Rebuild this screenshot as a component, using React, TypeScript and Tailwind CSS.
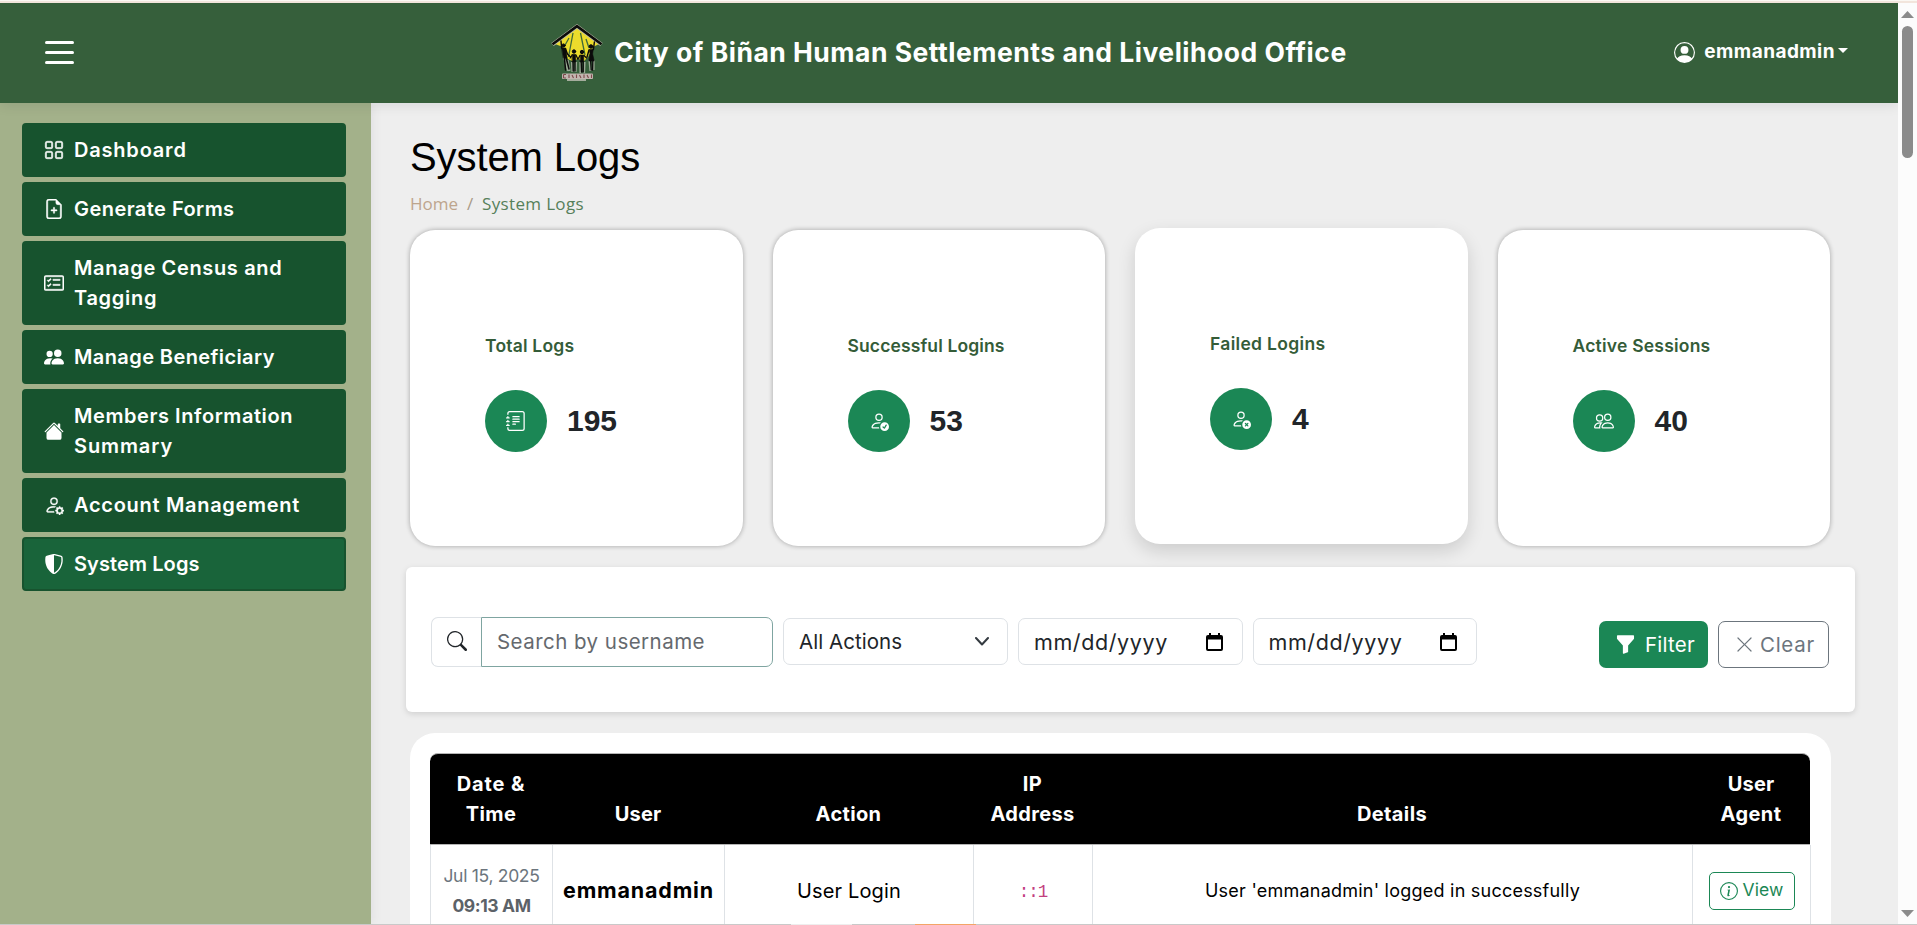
import type { ReactNode } from "react";
import {
  BsCardChecklist,
  BsFileEarmarkPlus,
  BsFunnelFill,
  BsGrid,
  BsHouseFill,
  BsInfoCircle,
  BsJournalText,
  BsPeople,
  BsPeopleFill,
  BsPersonCheck,
  BsPersonCircle,
  BsPersonGear,
  BsPersonX,
  BsSearch,
  BsShieldShaded,
  BsXLg,
} from "react-icons/bs";

function Logo() {
  return (
    <svg width="52" height="58" viewBox="0 0 52 58" className="shrink-0">
      <path d="M26 3 L48 20 L42 23 L37 33 L33 37 L27 35 L21 37 L17 35 L12 23 L4 20 Z" fill="#ecdc2c" />
      <path d="M22 9 L17.5 33 M29.5 9 L34 31 M18 14 L13 23 M35 15 L38 24" stroke="#3f6a3a" strokeWidth="1.3" />
      <path d="M1.5 20.5 L26 2.4 L50.5 20.5" fill="none" stroke="#b9b9a8" strokeWidth="4" />
      <path d="M1.5 20.3 L26 2.2 L50.5 20.3" fill="none" stroke="#0c0c0a" strokeWidth="2.6" />
      <path d="M13 33 L17 47 M16.5 36 L18.5 47 M21 38 L21.5 48 M25 38 L24.5 48 M29.5 38 L29.5 49 M33.5 38 L33 49 M38.5 36 L39.5 47 M42.5 36 L42.5 46" stroke="#c3c9ba" strokeWidth="2.2" opacity="0.7" />
      <g stroke="#0a0a0a" fill="#0a0a0a" strokeLinecap="round">
        <circle cx="12.5" cy="21.5" r="1.6" />
        <path d="M10 17 L10.6 24 M14.5 25 L16.5 30 L19.5 33" strokeWidth="1.4" fill="none" />
        <path d="M10.8 24 L14.8 24 L16 34 L12.6 34 Z" strokeWidth="0.6" />
        <path d="M13.4 34 L14.6 46 M15.2 34 L18 45" strokeWidth="1.5" fill="none" />
        <circle cx="23" cy="27.5" r="1.7" />
        <path d="M21.3 30.5 L24.7 30.5 L24.6 38 L21.4 38 Z" strokeWidth="0.6" />
        <path d="M21.2 31 L19.2 34 M25 31 L26.8 35" strokeWidth="1.2" fill="none" />
        <path d="M22 38 L22.2 47 M24 38 L24 47" strokeWidth="1.4" fill="none" />
        <circle cx="31" cy="28" r="1.7" />
        <path d="M29.3 31 L32.7 31 L32.7 38 L29.4 38 Z" strokeWidth="0.6" />
        <path d="M33 31.5 L35.5 34 M29 31.5 L27 35" strokeWidth="1.2" fill="none" />
        <path d="M30.2 38 L30.6 48 M32.2 38 L32.2 48" strokeWidth="1.4" fill="none" />
        <circle cx="40" cy="22.5" r="1.8" />
        <path d="M38.4 25.5 L42.2 25.5 L41.6 30 L43.2 37 L37.8 37 L39 30 Z" strokeWidth="0.6" />
        <path d="M42.4 25.5 L43.4 18 M38 26 L36 33" strokeWidth="1.4" fill="none" />
        <path d="M39.6 37 L40.2 46 M41.8 37 L41.6 46" strokeWidth="1.3" fill="none" />
      </g>
      <rect x="11" y="49.5" width="31" height="5.5" rx="1" fill="#c2b6b0" />
      <rect x="16" y="55" width="19" height="2" fill="#a5ad9d" />
      <path
        d="M12.5 50.5 V54 M12.5 50.5 H15 M12.5 54 H15 M18 50.5 V54 M21 51 L22.5 54 M25.5 50.5 V54 M28.5 51 L30 54 M33 50.5 V54 M36 51 L37.5 54 M40.5 50.5 V54"
        stroke="#7d4a4c"
        strokeWidth="1.1"
        fill="none"
      />
    </svg>
  );
}

function TopBar() {
  return (
    <header className="relative z-10 grid h-[100px] shrink-0 grid-cols-[1fr_auto_1fr] items-center bg-[#365f3b] text-white shadow-[0_2px_12px_rgba(1,20,40,0.1)]">
      <div className="-mt-[2px] ml-[45px] flex w-[29px] flex-col gap-[7px]">
        <span className="h-[3px] rounded-full bg-white" />
        <span className="h-[3px] rounded-full bg-white" />
        <span className="h-[3px] rounded-full bg-white" />
      </div>
      <div className="flex items-center gap-[11px]">
        <Logo />
        <h1 className="-mt-0.5 text-[26.5px] leading-[40px] font-bold tracking-[0.5px] whitespace-nowrap">
          City of Biñan Human Settlements and Livelihood Office
        </h1>
      </div>
      <div className="-mt-px flex items-center justify-end pr-[50px]">
        <BsPersonCircle className="size-[21px]" />
        <span className="ml-[9px] text-[19px] font-bold tracking-[0.45px]">emmanadmin</span>
        <svg width="10" height="5" viewBox="0 0 10 5" className="mb-1 ml-[3px]">
          <path d="M0 0 H10 L5 5 Z" fill="currentColor" />
        </svg>
      </div>
    </header>
  );
}

function NavItem({ icon, active, children }: { icon: ReactNode; active?: boolean; children: ReactNode }) {
  return (
    <a
      className={`flex items-center rounded-[4px] border-2 border-[#17532e] py-[10px] pl-5 ${
        active ? "bg-[#19643a]" : "bg-[#17532e]"
      }`}
    >
      <span className="flex w-[30px] shrink-0 text-[20px]">{icon}</span>
      <span className="flex flex-col leading-[30px]">{children}</span>
    </a>
  );
}

function Sidebar() {
  return (
    <nav className="flex w-[371px] shrink-0 flex-col gap-[5px] bg-[#a3b18a] px-[22px] pt-5 pr-[25px] text-[20px] font-semibold whitespace-nowrap text-white shadow-[0_0_12px_rgba(1,20,40,0.08)]">
      <NavItem icon={<BsGrid className="stroke-[0.4px]" />}>
        <span className="tracking-[0.8px]">Dashboard</span>
      </NavItem>
      <NavItem icon={<BsFileEarmarkPlus className="stroke-[0.4px]" />}>
        <span className="tracking-[0.45px]">Generate Forms</span>
      </NavItem>
      <NavItem icon={<BsCardChecklist className="stroke-[0.4px]" />}>
        <span className="tracking-[0.65px]">Manage Census and</span>
        <span className="tracking-[0.7px]">Tagging</span>
      </NavItem>
      <NavItem icon={<BsPeopleFill />}>
        <span className="tracking-[0.4px]">Manage Beneficiary</span>
      </NavItem>
      <NavItem icon={<BsHouseFill />}>
        <span className="tracking-[0.57px]">Members Information</span>
        <span className="tracking-[0.9px]">Summary</span>
      </NavItem>
      <NavItem icon={<BsPersonGear className="stroke-[0.2px]" />}>
        <span className="tracking-[0.7px]">Account Management</span>
      </NavItem>
      <NavItem icon={<BsShieldShaded />} active>
        <span className="tracking-[0.1px]">System Logs</span>
      </NavItem>
    </nav>
  );
}

function StatCard({ title, value, icon, raised }: { title: ReactNode; value: string; icon: ReactNode; raised?: boolean }) {
  return (
    <section
      className={`flex h-[316px] flex-col rounded-[25px] bg-white px-[75px] pt-[101px] ${
        raised
          ? "-mt-0.5 mb-0.5 shadow-[0_7px_18px_rgba(0,0,0,0.14)]"
          : "shadow-[0_0_5px_rgba(0,0,0,0.32)]"
      }`}
    >
      <h2 className="text-[17.5px] leading-[30px] font-semibold whitespace-nowrap text-[#345c38]">{title}</h2>
      <div className="mt-[29px] flex items-center">
        <span className="flex size-[62px] items-center justify-center rounded-full bg-[#1b8755] text-[20px] text-white">
          {icon}
        </span>
        <span className="ml-5 font-['Liberation_Sans',sans-serif] text-[30px] leading-none font-bold text-[#212529]">
          {value}
        </span>
      </div>
    </section>
  );
}

function DateField() {
  return (
    <div className="mt-px mr-[10px] flex h-[47px] w-[224.5px] items-center justify-between rounded-[7px] border border-[#dee2e6] pr-[19px] pl-[15px] text-[#212529]">
      <span className="pt-0.5 text-[21.5px] tracking-[0.6px]">mm/dd/yyyy</span>
      <svg width="17" height="18" viewBox="0 0 17 18">
        <path
          d="M3 0 h2 v2 h7 v-2 h2 v2 h1 a2 2 0 0 1 2 2 v12 a2 2 0 0 1 -2 2 h-13 a2 2 0 0 1 -2 -2 v-12 a2 2 0 0 1 2 -2 h1 Z M2 6.5 v9.5 h13 v-9.5 Z"
          fill="#000"
          fillRule="evenodd"
        />
      </svg>
    </div>
  );
}

function FilterBar() {
  return (
    <section className="mt-[21px] -ml-1 flex h-[145px] w-[1449px] shrink-0 items-start rounded-[6px] bg-white pt-[50px] pl-[25px] text-[20.5px] shadow-[0_2px_6px_rgba(0,0,0,0.13)]">
      <div className="mr-[10px] flex h-[50px] w-[342px]">
        <span className="flex w-[50px] items-center justify-center rounded-l-[7px] border border-r-0 border-[#dee2e6] pb-0.5 text-[20px] text-[#212529]">
          <BsSearch />
        </span>
        <span className="flex flex-1 items-center rounded-r-[7px] border border-[#7fa5a1] pt-px pl-[15px] tracking-[0.46px] text-[#65696e]">
          Search by username
        </span>
      </div>
      <div className="mt-px mr-[10px] flex h-[47px] w-[225px] items-center justify-between rounded-[7px] border border-[#dee2e6] pr-[18px] pl-[15px] text-[#212529]">
        <span className="pt-0.5 tracking-[0.05px]">All Actions</span>
        <svg width="14" height="9" viewBox="0 0 14 9" fill="none" stroke="#343a40" strokeWidth="2" strokeLinecap="round" strokeLinejoin="round">
          <path d="M1 1 L7 7.5 L13 1" />
        </svg>
      </div>
      <DateField />
      <DateField />
      <div className="mt-1 mr-[26px] ml-auto flex gap-[10px]">
        <button className="flex h-[47px] w-[109px] items-center rounded-[7px] bg-[#1b8755] pl-[16px] text-white">
          <BsFunnelFill className="size-[21px]" />
          <span className="ml-[9px] pt-px tracking-[0.25px]">Filter</span>
        </button>
        <button className="flex h-[47px] w-[111px] items-center rounded-[7px] border border-[#6c757d] pl-[16px] text-[#6c757d]">
          <BsXLg className="size-[19px]" />
          <span className="ml-[6px] pt-px tracking-[0.7px]">Clear</span>
        </button>
      </div>
    </section>
  );
}

function LogTable() {
  return (
    <section className="mt-[21px] h-[220px] w-[1421px] shrink-0 rounded-t-[25px] bg-white px-5 pt-5">
      <div className="grid h-[92px] w-[1380px] grid-cols-[122px_172px_249px_119px_600px_118px] items-end overflow-hidden rounded-t-[8px] border-y border-[#b5b5b5] bg-black pb-[15px] text-center text-[20px] leading-[30px] font-bold text-white">
        <div className="flex flex-col">
          <span className="tracking-[0.9px]">Date &amp;</span>
          <span className="tracking-[0.4px]">Time</span>
        </div>
        <span className="tracking-[0.15px]">User</span>
        <span className="tracking-[0.35px]">Action</span>
        <div className="flex flex-col">
          <span className="tracking-[0.5px]">IP</span>
          <span className="tracking-[0.35px]">Address</span>
        </div>
        <span className="tracking-[0.4px]">Details</span>
        <div className="flex flex-col">
          <span className="tracking-[0.15px]">User</span>
          <span className="tracking-[0.45px]">Agent</span>
        </div>
      </div>
      <div className="grid h-[91px] w-[1381px] grid-cols-[122px_172px_249px_119px_600px_118px] divide-x divide-[#dee2e6] border-l border-[#dee2e6] text-center text-black">
        <div className="flex flex-col justify-center text-[17.5px] leading-[30px]">
          <span className="tracking-[-0.3px] text-[#6c757d]">Jul 15, 2025</span>
          <span className="font-bold tracking-[-0.4px] text-[#5c6268]">09:13 AM</span>
        </div>
        <span className="flex items-center justify-center text-[21.5px] font-bold tracking-[0.8px]">emmanadmin</span>
        <span className="flex items-center justify-center text-[20px] tracking-[0.15px]">User Login</span>
        <span className="flex items-center justify-center pt-1 font-['Liberation_Mono',monospace] text-[17.5px] tracking-[-1px] text-[#c2407f]">
          ::1
        </span>
        <span className="flex items-center justify-center text-[18px] tracking-[0.23px]">
          User 'emmanadmin' logged in successfully
        </span>
        <div className="flex items-center justify-center border-r border-[#dee2e6]">
          <button className="flex h-[38px] w-[86px] items-center rounded-[5px] border border-[#1b8755] pl-[10px] text-[17.5px] text-[#1b8755]">
            <BsInfoCircle className="size-[18px]" />
            <span className="ml-[5px] tracking-[0.1px]">View</span>
          </button>
        </div>
      </div>
    </section>
  );
}

function ScrollBar() {
  return (
    <div className="flex w-[19px] shrink-0 flex-col items-center bg-[#fcfcfc] pt-2 pb-[7px]">
      <svg width="13" height="7" viewBox="0 0 13 7" className="shrink-0">
        <path d="M0 7 L6.5 0 L13 7 Z" fill="#8b8b8b" />
      </svg>
      <div className="mt-2 h-[132px] w-[11px] rounded-full bg-[#8b8b8b]" />
      <svg width="13" height="7" viewBox="0 0 13 7" className="mt-auto shrink-0">
        <path d="M0 0 H13 L6.5 7 Z" fill="#8b8b8b" />
      </svg>
    </div>
  );
}

export default function App() {
  return (
    <div className="flex h-[925px] w-[1917px] flex-col overflow-hidden bg-[#eeeeee] font-['Inter',sans-serif]">
      <div className="h-[3px] shrink-0 border-t border-[#fbf8f3] bg-[#f2e5dc]" />
      <div className="flex h-[921px] shrink-0">
        <div className="flex w-[1898px] flex-col overflow-hidden">
          <TopBar />
          <div className="flex min-h-0 flex-1">
            <Sidebar />
            <main className="flex flex-1 flex-col overflow-hidden pt-[30px] pl-[39px]">
              <h1 className="shrink-0 font-['Liberation_Sans',sans-serif] text-[40px] leading-[48px] tracking-[-0.1px] text-black">
                System Logs
              </h1>
              <div className="mt-[10px] flex h-[26px] shrink-0 items-center font-['Open_Sans',sans-serif] text-[17px]">
                <span className="w-[57px] text-[#bda58d]">Home</span>
                <span className="w-[15px] text-[#a99a88]">/</span>
                <span className="tracking-[0.35px] text-[#56805a]">System Logs</span>
              </div>
              <div className="mt-[13px] grid w-[1420px] shrink-0 grid-cols-4 gap-[30px]">
                <StatCard title={<span className="tracking-[0.2px]">Total Logs</span>} value="195" icon={<BsJournalText />} />
                <StatCard title={<span className="tracking-[0.12px]">Successful Logins</span>} value="53" icon={<BsPersonCheck />} />
                <StatCard title={<span className="tracking-[0.32px]">Failed Logins</span>} value="4" icon={<BsPersonX />} raised />
                <StatCard title={<span className="tracking-[0.22px]">Active Sessions</span>} value="40" icon={<BsPeople />} />
              </div>
              <FilterBar />
              <LogTable />
            </main>
          </div>
        </div>
        <ScrollBar />
      </div>
      <div className="flex h-px shrink-0 bg-[#c9c9c9]">
        <span className="ml-[791px] w-[61px] bg-[#eeeeee]" />
        <span className="ml-[63px] w-[61px] bg-[#f3a566]" />
      </div>
    </div>
  );
}
